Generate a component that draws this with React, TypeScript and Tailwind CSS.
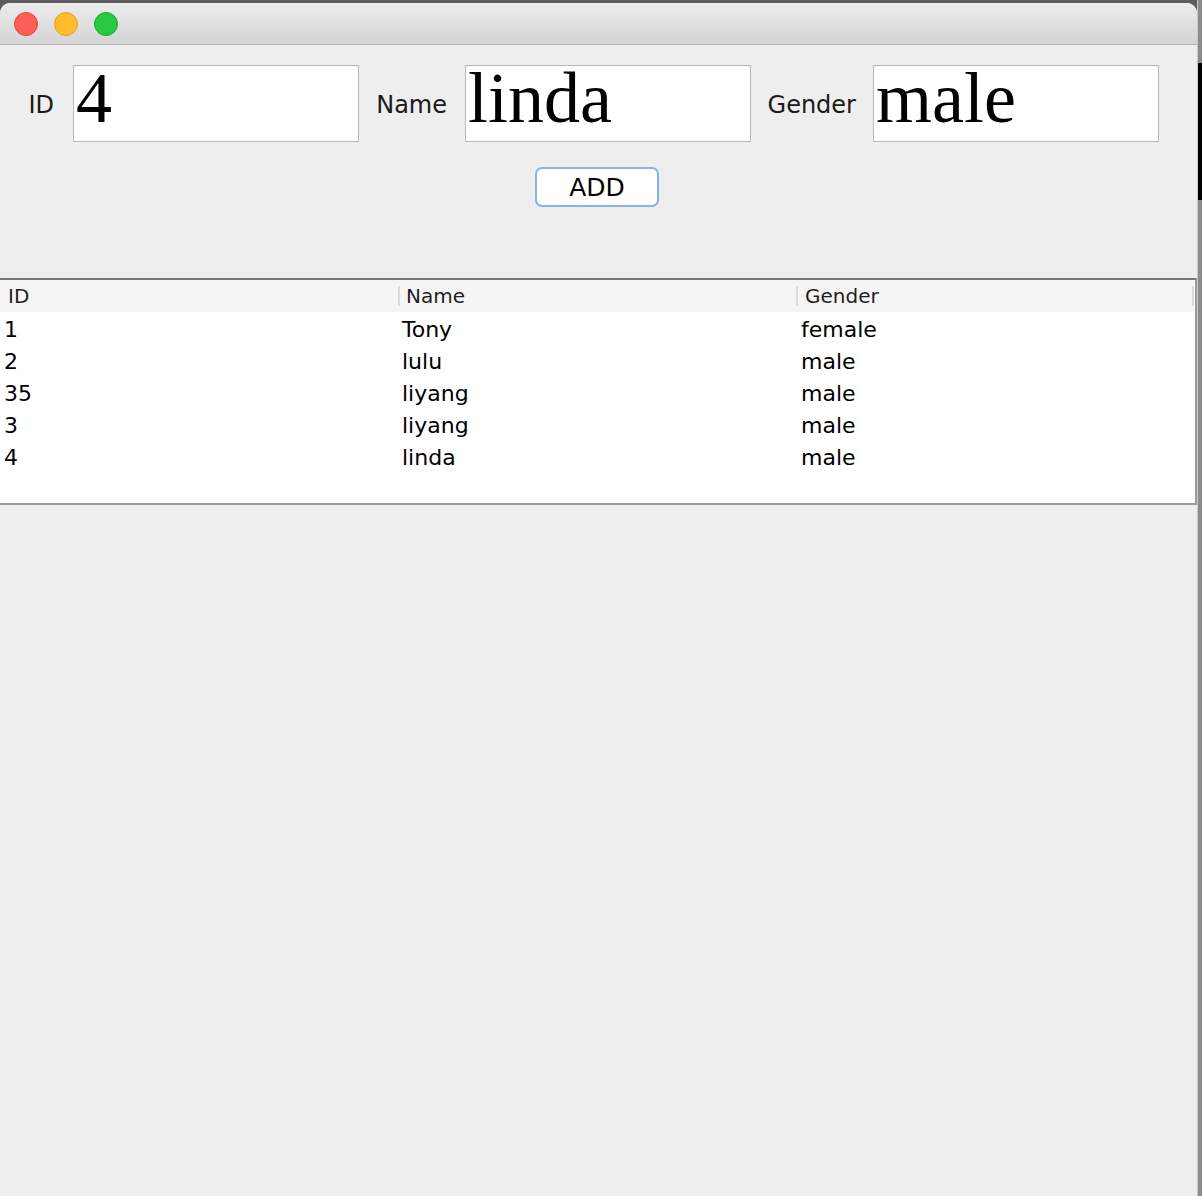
const rows = [
  { id: "1", name: "Tony", gender: "female" },
  { id: "2", name: "lulu", gender: "male" },
  { id: "35", name: "liyang", gender: "male" },
  { id: "3", name: "liyang", gender: "male" },
  { id: "4", name: "linda", gender: "male" },
];

const fields = [
  { label: "ID", value: "4", labelBox: "w-[73px] pr-[19px]" },
  { label: "Name", value: "linda", labelBox: "w-[106px] pr-[18px]" },
  { label: "Gender", value: "male", labelBox: "w-[122px] pr-[17px]" },
];

const TrafficLights = () => (
  <div className="flex items-center gap-[16px] pl-[14px]">
    <span className="h-[24px] w-[24px] rounded-full border border-[#e0443e] bg-[#fe5f57]" />
    <span className="h-[24px] w-[24px] rounded-full border border-[#dea123] bg-[#febc2e]" />
    <span className="h-[24px] w-[24px] rounded-full border border-[#1aab29] bg-[#28c840]" />
  </div>
);

export default function App() {
  return (
    <div className="flex h-[1196px] w-[1202px] overflow-hidden bg-[#5c5c5c] font-['DejaVu_Sans',sans-serif]">
      {/* Window */}
      <div className="mt-[3px] flex w-[1197px] flex-col overflow-hidden rounded-t-[10px] bg-[#eeeeee]">
        {/* Title bar */}
        <div className="flex h-[42px] shrink-0 items-center border-b border-[#b6b6b6] bg-gradient-to-b from-[#ececec] to-[#d4d4d4]">
          <TrafficLights />
        </div>

        {/* Form */}
        <div className="flex items-center pt-[20px]">
          {fields.map((f) => (
            <div key={f.label} className="flex items-center">
              <div className={`${f.labelBox} pt-[2px] text-right text-[24px] leading-none text-[#1a1a1a]`}>
                {f.label}
              </div>
              <div className="h-[77px] w-[286px] border border-[#b9b9b9] bg-white pl-[2px] font-['Liberation_Serif',serif] text-[72px] leading-[80px] text-black">
                <div className="-mt-[8px]">{f.value}</div>
              </div>
            </div>
          ))}
        </div>

        <button className="ml-[535px] mt-[25px] flex h-[40px] w-[124px] items-center justify-center rounded-[7px] border-2 border-[#86b3ea] bg-white text-[25px] leading-none text-black">
          ADD
        </button>

        {/* Table */}
        <div className="mt-[71px] flex flex-col border-t-2 border-b-2 border-r-2 border-t-[#777777] border-b-[#9a9a9a] border-r-[#9a9a9a] bg-white">
          <div className="flex h-[32px] w-[1194px] items-center bg-[#f5f5f5] text-[20px] text-[#1e1e1e]">
            <div className="flex w-[398px] items-center pl-[8px]">ID</div>
            <div className="flex w-[398px] items-center">
              <span className="h-[20px] w-[2px] bg-[#dcdcdc]" />
              <span className="ml-[6px]">Name</span>
            </div>
            <div className="flex w-[396px] items-center">
              <span className="h-[20px] w-[2px] bg-[#dcdcdc]" />
              <span className="ml-[7px]">Gender</span>
            </div>
            <span className="h-[20px] w-[2px] bg-[#dcdcdc]" />
          </div>
          <div className="h-[191px] pt-[1px]">
            {rows.map((r, i) => (
              <div key={i} className="flex h-[32px] items-center text-[22px] text-black">
                <div className="w-[398px] pl-[4px]">{r.id}</div>
                <div className="w-[398px] pl-[4px]">{r.name}</div>
                <div className="w-[396px] pl-[5px]">{r.gender}</div>
              </div>
            ))}
          </div>
        </div>

        <div className="flex-1" />
      </div>

      {/* Desktop strip on the right */}
      <div className="flex w-[5px] flex-col border-l border-[#c9c9c9] bg-[#8c8c8c]">
        <div className="mt-[63px] h-[137px] bg-black" />
      </div>
    </div>
  );
}
